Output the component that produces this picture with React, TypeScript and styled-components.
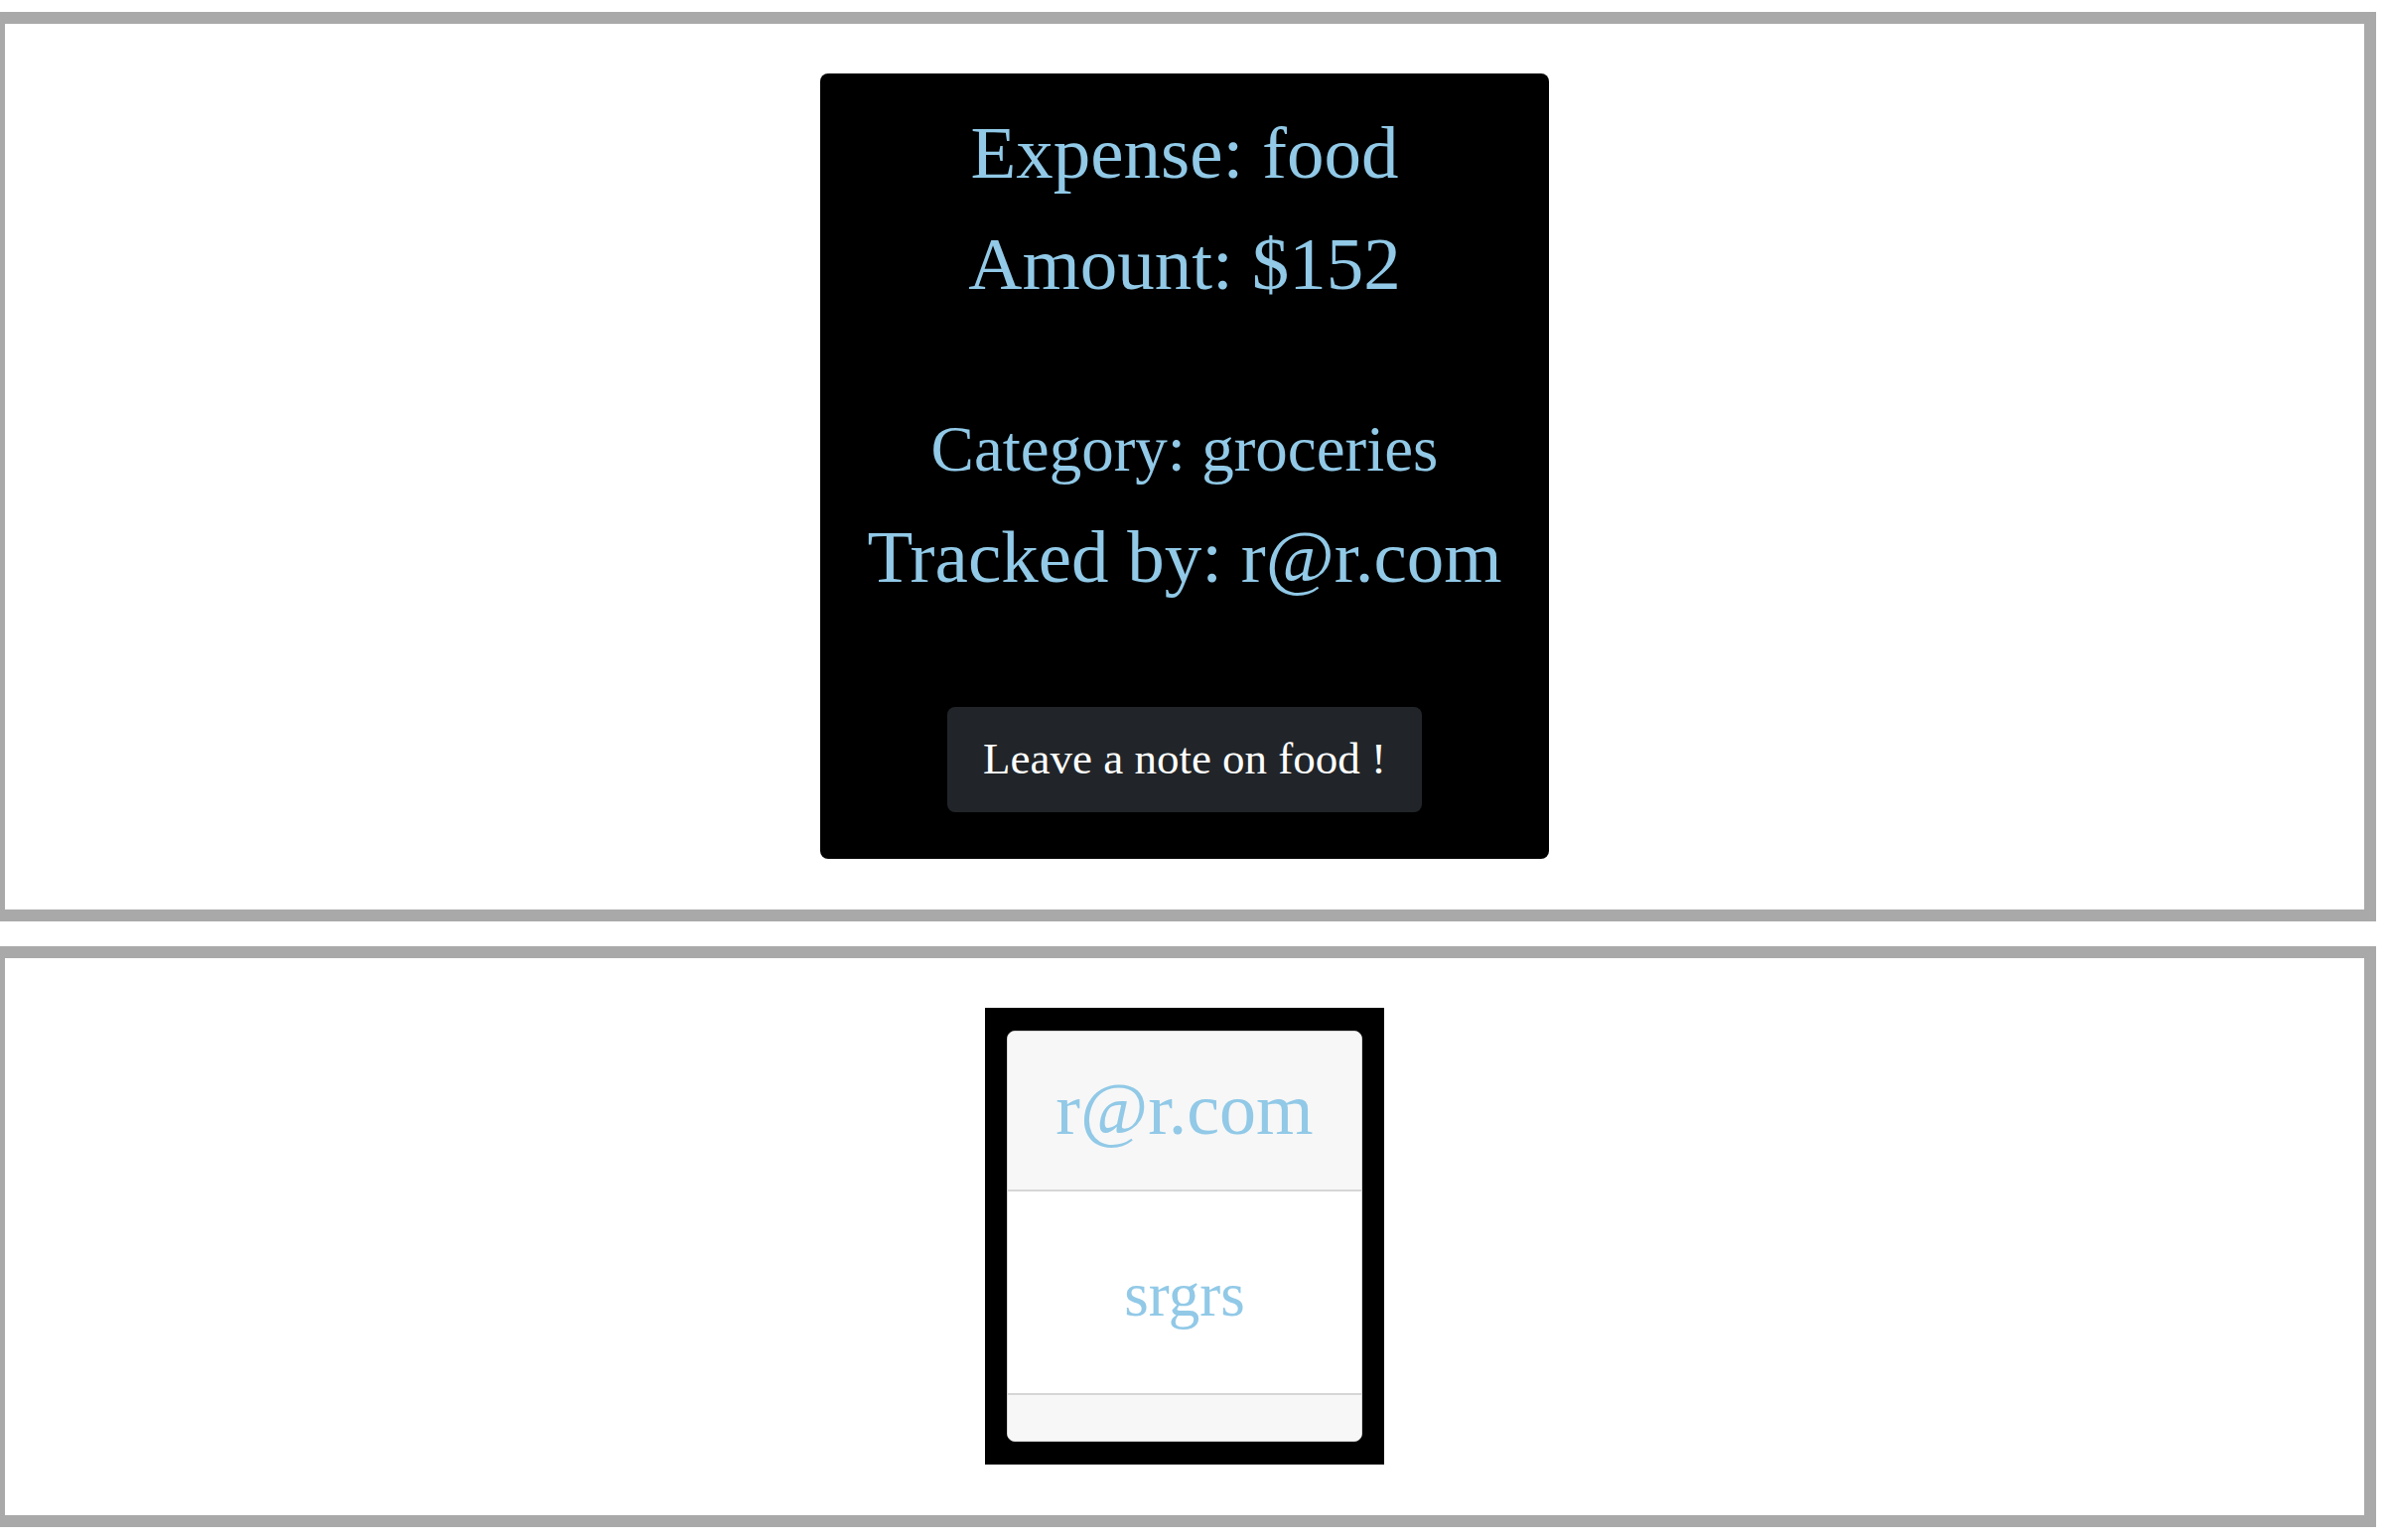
import React from "react";
import styled, { createGlobalStyle } from "styled-components";

const GlobalStyle = createGlobalStyle`
  html, body {
    margin: 0;
    padding: 0;
    background: #ffffff;
  }
  body {
    font-family: "Liberation Serif", "Times New Roman", serif;
  }
  * {
    box-sizing: border-box;
  }
`;

const Page = styled.div`
  display: flex;
  flex-direction: column;
  gap: 25px;
  padding-top: 12px;
  margin-left: -7px;
  width: 2400px;
`;

const Panel = styled.section`
  display: flex;
  justify-content: center;
  align-items: flex-start;
  border: 12px solid #a9a9a9;
  padding: 50px 0 51px;
`;

const ExpenseCard = styled.div`
  width: 734px;
  background: #000000;
  border-radius: 8px;
  padding: 35px 20px 47px;
  display: flex;
  flex-direction: column;
  align-items: center;
  text-align: center;
`;

const InfoLine = styled.h2<{ $size: number; $gap: number }>`
  margin: 0 0 ${(p) => p.$gap}px;
  font-family: "Liberation Serif", "Times New Roman", serif;
  font-weight: 400;
  font-size: ${(p) => p.$size}px;
  line-height: ${(p) => Math.round(p.$size * 1.2)}px;
  color: #91c9e7;
  white-space: nowrap;
`;

const NoteButton = styled.button`
  height: 106px;
  width: 478px;
  border: none;
  border-radius: 8px;
  background: #212529;
  color: #ffffff;
  font-family: "Liberation Serif", "Times New Roman", serif;
  font-size: 45px;
  line-height: 1.5;
  padding: 0 36px;
  cursor: pointer;
  white-space: nowrap;
`;

const NotesFrame = styled.div`
  background: #000000;
  padding: 23px 22px;
`;

const NoteCard = styled.div`
  width: 358px;
  background: #ffffff;
  border: 1px solid #d6d6d6;
  border-radius: 8px;
  overflow: hidden;
  display: flex;
  flex-direction: column;
`;

const NoteHeader = styled.div`
  background: #f7f7f7;
  border-bottom: 2px solid #d6d6d6;
  padding: 34px 0 36px;
  text-align: center;
`;

const NoteBody = styled.div`
  background: #ffffff;
  padding: 66px 0 61px;
  text-align: center;
`;

const NoteFooter = styled.div`
  background: #f7f7f7;
  border-top: 2px solid #d6d6d6;
  height: 48px;
`;

const NoteText = styled.div<{ $size: number }>`
  font-family: "Liberation Serif", "Times New Roman", serif;
  font-size: ${(p) => p.$size}px;
  line-height: ${(p) => Math.round(p.$size * 1.2)}px;
  color: #91c9e7;
  white-space: nowrap;
`;

export default function App() {
  return (
    <>
      <GlobalStyle />
      <Page>
        <Panel>
          <ExpenseCard>
            <InfoLine $size={75} $gap={22}>Expense: food</InfoLine>
            <InfoLine $size={75} $gap={102}>Amount: $152</InfoLine>
            <InfoLine $size={65} $gap={25}>Category: groceries</InfoLine>
            <InfoLine $size={75} $gap={106}>Tracked by: r@r.com</InfoLine>
            <NoteButton>Leave a note on food !</NoteButton>
          </ExpenseCard>
        </Panel>
        <Panel>
          <NotesFrame>
            <NoteCard>
              <NoteHeader>
                <NoteText $size={74}>r@r.com</NoteText>
              </NoteHeader>
              <NoteBody>
                <NoteText $size={63}>srgrs</NoteText>
              </NoteBody>
              <NoteFooter />
            </NoteCard>
          </NotesFrame>
        </Panel>
      </Page>
    </>
  );
}
